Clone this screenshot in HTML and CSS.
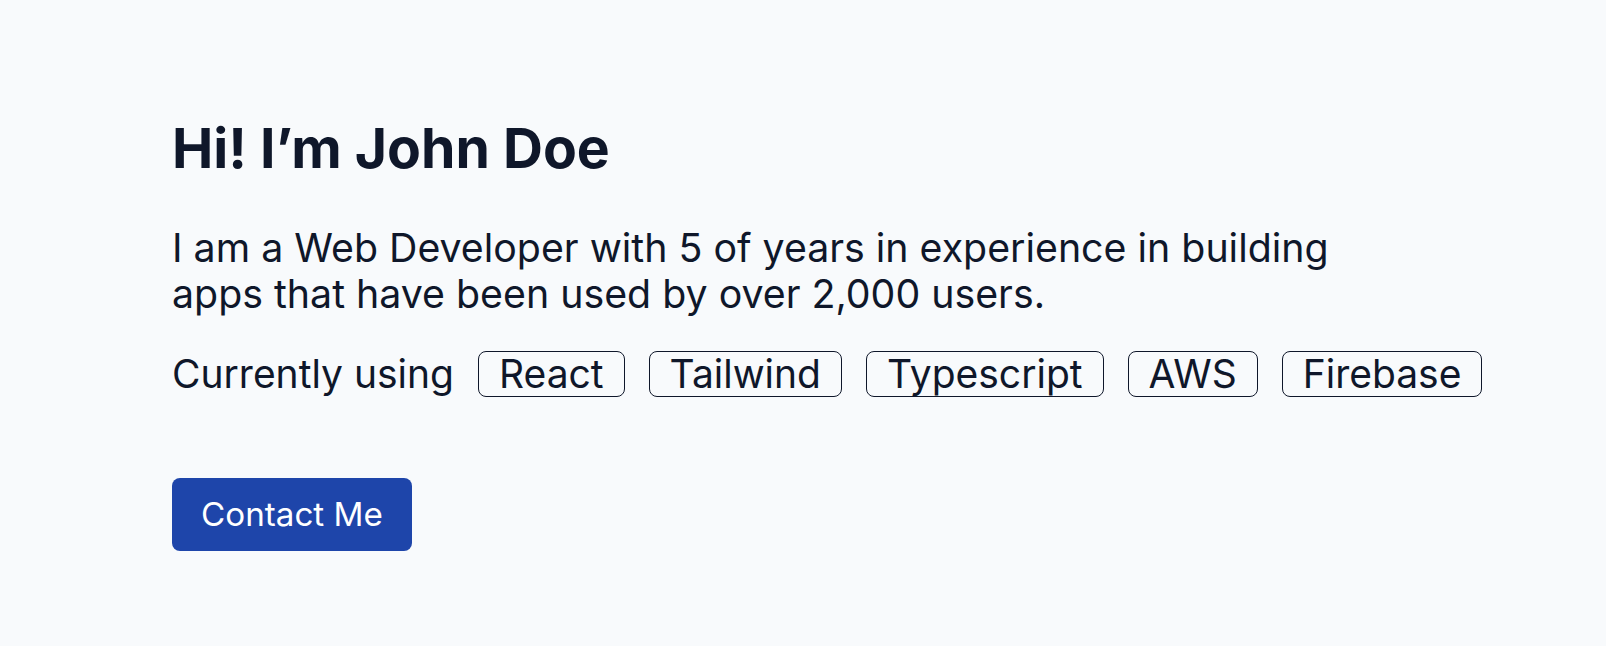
FILE: index.html
```html
<!DOCTYPE html>
<html>
  <head>
    <title>John Doe</title>
    <meta charset="UTF-8">
    <meta name="viewport" content="width=device-width, initial-scale=1.0">
    <link rel="stylesheet" href="styles.css">
  </head>
  <body>
    <section class="hero">
      <h1 class="hero-title">Hi! I’m John Doe</h1>
      <p class="hero-text">I am a Web Developer with 5 of years in experience in building apps that have been used by over 2,000 users.</p>
      <div class="stack">
        <span class="stack-label">Currently using</span>
        <span class="tag">React</span>
        <span class="tag">Tailwind</span>
        <span class="tag">Typescript</span>
        <span class="tag">AWS</span>
        <span class="tag">Firebase</span>
      </div>
      <a class="contact" href="#">Contact Me</a>
    </section>
  </body>
</html>
```

FILE: styles.css
```css
*{
   box-sizing: border-box;
}

body{
   margin: 0;
   background: #f8fafc;
   color: #0f172a;
   font-family: Inter, "Noto Sans", sans-serif;
}

.hero
{
   padding: 115px 40px 0 172px;
   display: flex;
   flex-direction: column;
   align-items: flex-start;
}

.hero-title
{
   margin: 0;
   font-size: 55.3px;
   line-height: 66px;
   font-weight: 700;
}

.hero-text
{
   margin: 44px 0 0;
   max-width: 1200px;
   font-size: 39.3px;
   line-height: 46px;
}

.stack
{
   margin-top: 34px;
   display: flex;
   align-items: center;
   gap: 24px;
   font-size: 39px;
   white-space: nowrap;
}

.stack-label
{
   line-height: 46px;
}

.tag
{
   border: 1px solid #0f172a;
   border-radius: 8px;
   padding: 0 20px;
   line-height: 44px;
}

.contact
{
   margin-top: 81px;
   padding: 17px 29px;
   background: #1e45aa;
   color: #fff;
   border-radius: 8px;
   font-size: 33.2px;
   line-height: 39px;
   text-decoration: none;
}
```
